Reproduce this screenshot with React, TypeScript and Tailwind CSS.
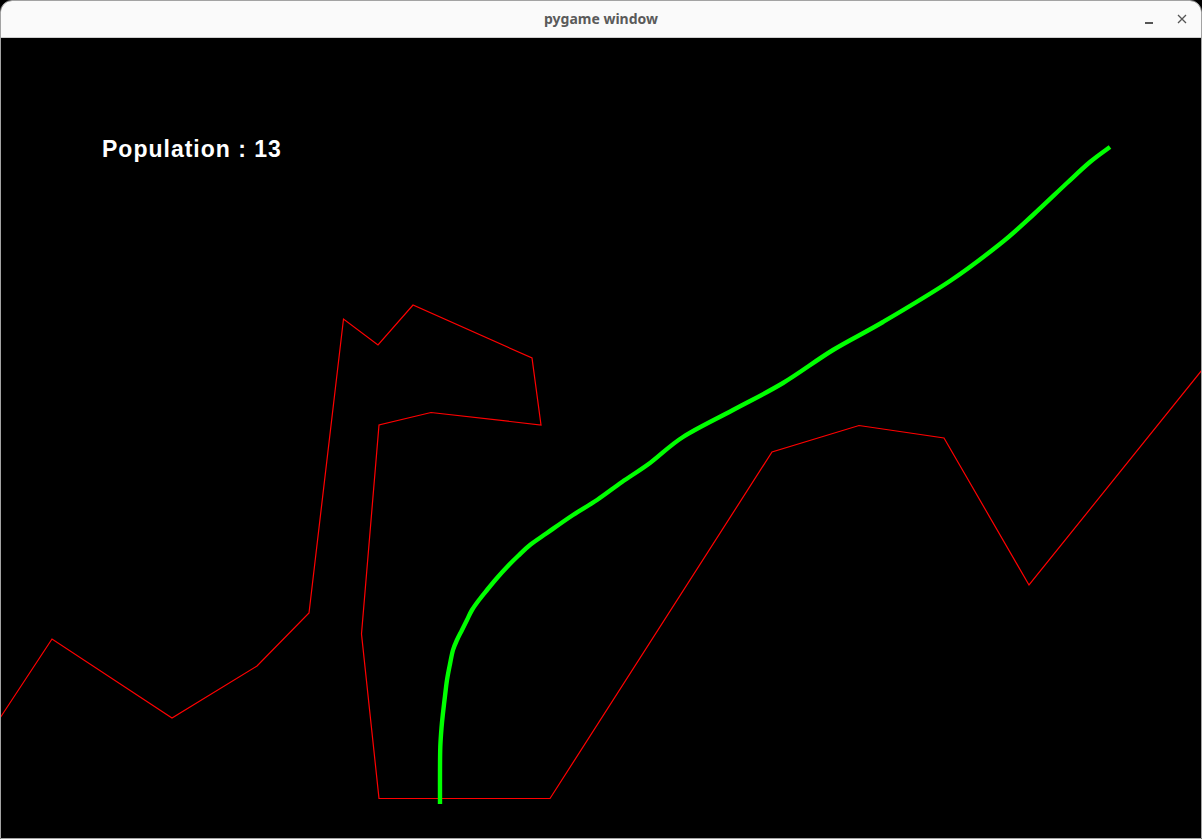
import React from "react";

const redPts: [number, number][] = [
  [0, 718], [52, 639], [172, 718], [257, 666], [309, 613], [343.5, 319], [378, 345], [413, 305],
  [532, 358], [541, 425], [431, 412.5], [379, 425], [361.5, 634], [379, 798.5], [550, 798.5],
  [772, 452], [859, 425.5], [944, 438], [1029, 585], [1202, 370],
];

const greenPts: [number, number][] = [
  [440, 804], [440, 770], [440.3, 747], [441.5, 728], [443, 713], [445, 696], [447, 680], [450, 664],
  [453, 650], [457, 640], [462, 630], [467, 620], [472, 610], [479, 600], [487, 590], [497, 578],
  [507, 567], [518, 556], [530, 545], [547, 533], [573, 515], [597, 500], [622, 482],
  [650, 463], [683, 437], [733, 410], [783, 383], [833, 350],
  [883, 322], [950, 281], [1000, 244], [1033, 215],
  [1067, 183], [1090, 162], [1110, 147],
];

const toStr = (p: [number, number][]) => p.map(([x, y]) => `${x},${y}`).join(" ");

function smoothPath(p: [number, number][]) {
  let d = `M${p[0][0]},${p[0][1]}`;
  for (let i = 0; i < p.length - 1; i++) {
    const p0 = p[i - 1] || p[i];
    const p1 = p[i];
    const p2 = p[i + 1];
    const p3 = p[i + 2] || p2;
    const c1x = p1[0] + (p2[0] - p0[0]) / 6;
    const c1y = p1[1] + (p2[1] - p0[1]) / 6;
    const c2x = p2[0] - (p3[0] - p1[0]) / 6;
    const c2y = p2[1] - (p3[1] - p1[1]) / 6;
    d += ` C${c1x},${c1y} ${c2x},${c2y} ${p2[0]},${p2[1]}`;
  }
  return d;
}

export default function App() {
  return (
    <div className="w-[1202px] h-[839px] bg-black overflow-hidden">
      <div className="w-[1202px] h-[839px] border border-[#a3a3a3] rounded-t-[12px] flex flex-col overflow-hidden bg-black">
        <div className="h-[37px] shrink-0 bg-[#fafafa] border-b border-[#cfcfcf] relative flex items-center justify-center">
          <span
            className="text-[14px] font-bold text-[#5a5a5a] leading-none"
            style={{ fontFamily: '"Noto Sans", "DejaVu Sans", sans-serif' }}
          >
            pygame window
          </span>
          <div className="absolute right-0 top-0 h-full flex items-center">
            <div className="w-[8px] h-[1.5px] bg-[#555] mt-[8px] mr-[24px]" />
            <svg width="10" height="10" viewBox="0 0 10 10" className="mr-[14px] mt-[-1px]">
              <path d="M1 1 L9 9 M9 1 L1 9" stroke="#555" strokeWidth="1.3" />
            </svg>
          </div>
        </div>
        <div className="relative w-[1200px] h-[800px] bg-black">
          <svg
            className="absolute inset-0"
            width="1200"
            height="800"
            viewBox="1 38 1200 800"
          >
            <polyline points={toStr(redPts)} fill="none" stroke="#ff0000" strokeWidth="1.2" />
            <path
              d={smoothPath(greenPts)}
              fill="none"
              stroke="#00ff00"
              strokeWidth="4.4"
              strokeLinejoin="round"
            />
          </svg>
          <div
            className="absolute left-[101px] top-[100px] text-white font-bold text-[23px] tracking-[1px] leading-none"
            style={{ fontFamily: '"Liberation Sans", Arial, sans-serif' }}
          >
            Population : 13
          </div>
        </div>
      </div>
    </div>
  );
}
